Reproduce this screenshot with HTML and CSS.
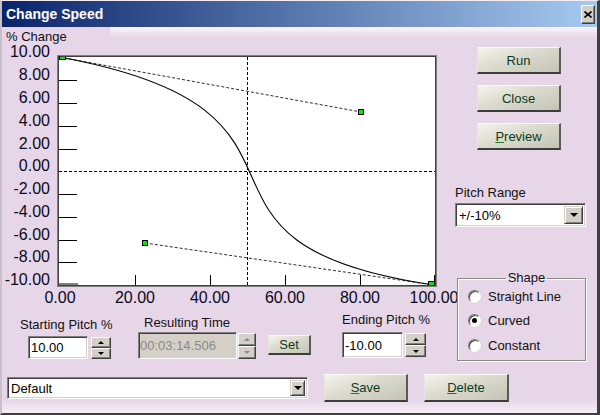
FILE: index.html
```html
<!DOCTYPE html>
<html lang="en">
  <head>
    <meta charset="UTF-8" />
    <meta name="viewport" content="width=device-width, initial-scale=1.0" />
    <title>Change Speed</title>
    <link rel="stylesheet" href="styles.css">
  </head>
  <body>
    <div class="window">
      <div class="titlebar">
        <span class="title">Change Speed</span>
        <button class="close-btn" aria-label="Close">
          <svg width="8" height="7" viewBox="0 0 8 7">
            <path d="M0.5 0.5 L7.5 6.5 M7.5 0.5 L0.5 6.5" stroke="#000" stroke-width="1.6" />
          </svg>
        </button>
      </div>

      <div class="content">
        <div class="main">
          <div class="left">
            <div class="axis-title">% Change</div>

            <!-- viewBox uses dialog coordinates so the numbers read like the layout -->
            <svg class="chart" width="452" height="266" viewBox="2 45 452 266">
              <defs>
                <clipPath id="plot">
                  <rect x="59" y="57" width="376" height="228" />
                </clipPath>
              </defs>

              <rect x="57" y="55" width="380" height="232" fill="#808080" />
              <rect x="58" y="56" width="378" height="230" fill="#404040" />
              <rect x="59" y="57" width="376" height="228" fill="#fff" />

              <g class="ticks">
                <path d="M59 80.5h18M59 103.5h18M59 126.5h18M59 149.5h18M59 194.5h18M59 217.5h18M59 240.5h18M59 262.5h18" />
                <path d="M59 284h19" stroke-width="2" />
                <path d="M135.5 275v10M210.5 275v10M285.5 275v10M360.5 275v10M434.5 275v10" />
              </g>

              <g class="guides">
                <path d="M59 171.5H435" />
                <path d="M247.5 57V285" />
              </g>

              <g class="handles-lines">
                <path d="M59 57L361 112" />
                <path d="M145 243L434 285" />
              </g>

              <path class="curve" d="M59 57C361 112 145 243 434 285" />

              <g class="handle" clip-path="url(#plot)">
                <rect x="59.5" y="53.5" width="6" height="6" />
                <rect x="428.5" y="281.5" width="6" height="6" />
              </g>
              <g class="handle">
                <rect x="358.5" y="109.5" width="5" height="5" />
                <rect x="142.5" y="240.5" width="5" height="5" />
              </g>

              <g class="axis-label y-label">
                <text x="50" y="57">10.00</text>
                <text x="50" y="80">8.00</text>
                <text x="50" y="103">6.00</text>
                <text x="50" y="126">4.00</text>
                <text x="50" y="149">2.00</text>
                <text x="50" y="171">0.00</text>
                <text x="50" y="194">-2.00</text>
                <text x="50" y="217">-4.00</text>
                <text x="50" y="240">-6.00</text>
                <text x="50" y="262">-8.00</text>
                <text x="50" y="285">-10.00</text>
              </g>
              <g class="axis-label x-label">
                <text x="60" y="303">0.00</text>
                <text x="135" y="303">20.00</text>
                <text x="210" y="303">40.00</text>
                <text x="285" y="303">60.00</text>
                <text x="360" y="303">80.00</text>
                <text x="434" y="303">100.00</text>
              </g>
            </svg>

            <div class="controls">
              <div class="field start-pitch">
                <div class="field-label">Starting Pitch %</div>
                <div class="field-row">
                  <input class="edit" type="text" value="10.00" />
                  <div class="spin">
                    <span class="spin-up"></span>
                    <span class="spin-down"></span>
                  </div>
                </div>
              </div>

              <div class="field result-time">
                <div class="field-label">Resulting Time</div>
                <div class="field-row">
                  <input class="edit" type="text" value="00:03:14.506" disabled />
                  <div class="spin disabled">
                    <span class="spin-up"></span>
                    <span class="spin-down"></span>
                  </div>
                </div>
              </div>

              <button class="skin-btn set-btn">Set</button>

              <div class="field end-pitch">
                <div class="field-label">Ending Pitch %</div>
                <div class="field-row">
                  <input class="edit" type="text" value="-10.00" />
                  <div class="spin">
                    <span class="spin-up"></span>
                    <span class="spin-down"></span>
                  </div>
                </div>
              </div>
            </div>
          </div>

          <div class="side">
            <button class="skin-btn">Run</button>
            <button class="skin-btn">Close</button>
            <button class="skin-btn"><u>P</u>review</button>

            <div class="range-label">Pitch Range</div>
            <div class="combo range">
              <span class="combo-value">+/-10%</span>
              <span class="drop-btn"></span>
            </div>

            <fieldset class="shape">
              <legend>Shape</legend>
              <label class="radio-row"><span class="radio"></span>Straight Line</label>
              <label class="radio-row"><span class="radio checked"></span>Curved</label>
              <label class="radio-row"><span class="radio"></span>Constant</label>
            </fieldset>
          </div>
        </div>

        <div class="footer">
          <div class="combo preset">
            <span class="combo-value">Default</span>
            <span class="drop-btn"></span>
          </div>
          <button class="skin-btn"><u>S</u>ave</button>
          <button class="skin-btn"><u>D</u>elete</button>
        </div>
      </div>
    </div>
  </body>
</html>
```

FILE: styles.css
```css
body {
  margin: 0;
  font-family: "Liberation Sans", Arial, sans-serif;
  font-size: 13px;
  color: #111;
  background: #e6d6e7;
}
.window {
  width: 600px;
  height: 415px;
  box-sizing: border-box;
  border-style: solid;
  border-width: 1px 3px 2px 2px;
  border-color: #f4eef4 #404040 #404040 #c8c0c8;
  display: flex;
  flex-direction: column;
  background: #e6d6e7;
}
.titlebar {
  height: 26px;
  flex: none;
  display: flex;
  align-items: center;
  justify-content: space-between;
  padding: 0 2px 0 4px;
  background: linear-gradient(to right, #0a246a, #a6caf0);
  color: #fff;
  font-size: 14px;
  font-weight: bold;
  line-height: 16px;
}
.close-btn {
  box-sizing: border-box;
  width: 14px;
  height: 19px;
  padding: 0;
  display: flex;
  align-items: center;
  justify-content: center;
  background: #d4d0c8;
  border: 1px solid;
  border-color: #fff #404040 #404040 #fff;
  box-shadow: inset -1px -1px 0 #808080;
}
.content {
  flex: 1;
  display: flex;
  flex-direction: column;
  background: linear-gradient(
    #fbf6fb,
    #e6d6e7 11px,
    #e6d6e7 calc(100% - 14px),
    #f6eef6
  );
}
.main {
  display: grid;
  grid-template-columns: 452px 1fr;
}
.axis-title {
  width: 104px;
  height: 16px;
  padding: 2px 0 0 4px;
  line-height: 16px;
  background: #e6d6e7;
}
.chart {
  display: block;
  overflow: visible;
}
.ticks path {
  stroke: #000;
  stroke-width: 1;
  fill: none;
}
.guides path {
  stroke: #000;
  stroke-width: 1;
  stroke-dasharray: 3 2;
  fill: none;
}
.handles-lines path {
  stroke: #303030;
  stroke-width: 1;
  stroke-dasharray: 3 2;
  fill: none;
}
.curve {
  stroke: #000;
  stroke-width: 1.1;
  fill: none;
}
.handle rect {
  fill: #10e010;
  stroke: #000;
  stroke-width: 1;
}
.axis-label {
  font-family: "Liberation Sans", Arial, sans-serif;
  font-size: 16px;
  fill: #0a0a1e;
}
.y-label {
  text-anchor: end;
}
.x-label {
  text-anchor: middle;
}

/* pitch / time fields under the chart */
.controls {
  height: 52px;
  display: flex;
  align-items: flex-start;
}
.field-label {
  line-height: 16px;
  white-space: nowrap;
}
.field-row {
  display: flex;
  align-items: flex-start;
}
.edit {
  box-sizing: border-box;
  margin: 0;
  padding: 0 0 0 2px;
  font: inherit;
  font-size: 13px;
  color: #000;
  background: #fff;
  border: 1px solid;
  border-color: #808080 #fff #fff #808080;
  box-shadow: inset 1px 1px 0 #404040, inset -1px -1px 0 #d4d0c8;
  outline: none;
}
.edit:disabled {
  background: #d4d0c8;
  color: #8a8a8a;
  padding-left: 1px;
}
.start-pitch {
  width: 93px;
  margin: 6px 0 0 18px;
}
.start-pitch .field-row {
  margin: 3px 0 0 8px;
  gap: 3px;
}
.start-pitch .edit {
  width: 60px;
  height: 23px;
}
.start-pitch .spin {
  width: 20px;
  height: 22px;
  margin-top: 1px;
}
.result-time {
  margin: 4px 0 0 25px;
}
.result-time .field-label {
  margin-left: 6px;
}
.result-time .field-row {
  margin-top: 1px;
  gap: 1px;
}
.result-time .edit {
  width: 99px;
  height: 27px;
}
.result-time .spin {
  width: 18px;
  height: 26px;
  margin-top: 1px;
}
.set-btn {
  width: 43px;
  height: 20px;
  margin: 24px 0 0 12px;
}
.end-pitch {
  margin: 1px 0 0 31px;
}
.end-pitch .field-row {
  margin-top: 4px;
  gap: 2px;
}
.end-pitch .edit {
  width: 61px;
  height: 26px;
}
.end-pitch .spin {
  width: 21px;
  height: 24px;
  margin-top: 1px;
}

/* up/down arrows */
.spin {
  display: flex;
  flex-direction: column;
}
.spin span {
  flex: 1;
  display: flex;
  align-items: center;
  justify-content: center;
  box-sizing: border-box;
  background: #d4d0c8;
  border: 1px solid;
  border-color: #fff #404040 #404040 #fff;
  box-shadow: inset -1px -1px 0 #808080;
}
.spin-up::after,
.spin-down::after {
  content: "";
  border-left: 3px solid transparent;
  border-right: 3px solid transparent;
}
.spin-up::after {
  border-bottom: 3px solid #000;
}
.spin-down::after {
  border-top: 3px solid #000;
}
.spin.disabled .spin-up::after {
  border-bottom-color: #8a8a8a;
}
.spin.disabled .spin-down::after {
  border-top-color: #8a8a8a;
}

/* skinned push buttons */
.skin-btn {
  box-sizing: border-box;
  padding: 0;
  font: inherit;
  font-size: 13px;
  color: #0d3b22;
  background: linear-gradient(160deg, #f4f4ec 0%, #dadace 45%, #c4c4b6 100%);
  border-style: solid;
  border-width: 1px 2px 2px 1px;
  border-color: #fafaf4 #5a5a58 #3c3c3c #e6e6de;
}
.skin-btn u {
  text-decoration-color: #1a7a2a;
}

/* right column */
.side {
  display: flex;
  flex-direction: column;
  align-items: flex-start;
  padding-top: 20px;
}
.side .skin-btn {
  width: 84px;
  height: 27px;
  margin-left: 23px;
}
.side .skin-btn + .skin-btn {
  margin-top: 11px;
}
.range-label {
  margin: 35px 0 0 1px;
  line-height: 16px;
}

/* drop-down lists */
.combo {
  box-sizing: border-box;
  display: flex;
  align-items: center;
  padding: 2px;
  background: #fff;
  border: 1px solid;
  border-color: #808080 #fff #fff #808080;
  box-shadow: inset 1px 1px 0 #404040, inset -1px -1px 0 #d4d0c8;
}
.combo-value {
  flex: 1;
  padding-left: 1px;
  color: #000;
}
.drop-btn {
  box-sizing: border-box;
  align-self: stretch;
  display: flex;
  align-items: center;
  justify-content: center;
  background: #d4d0c8;
  border: 1px solid;
  border-color: #d4d0c8 #404040 #404040 #d4d0c8;
  box-shadow: inset 1px 1px 0 #fff, inset -1px -1px 0 #808080;
}
.drop-btn::after {
  content: "";
  border-left: 4px solid transparent;
  border-right: 4px solid transparent;
  border-top: 4px solid #000;
}
.range {
  width: 131px;
  height: 24px;
  margin: 2px 0 0 1px;
}
.range .drop-btn {
  width: 19px;
}

/* shape radio group */
.shape {
  box-sizing: border-box;
  width: 129px;
  margin: 45px 0 0 3px;
  padding: 0 0 3px 10px;
  border: 1px solid #8a8a8a;
  box-shadow: 1px 1px 0 #fff, inset 1px 1px 0 #fff;
}
.shape legend {
  margin: 0 auto;
  padding: 0 2px;
  line-height: 12px;
}
.radio-row {
  display: flex;
  align-items: center;
  gap: 7px;
  height: 24px;
}
.radio-row + .radio-row {
  height: 25px;
}
.radio-row:last-child {
  height: 24px;
}
.radio {
  box-sizing: border-box;
  width: 13px;
  height: 13px;
  display: flex;
  align-items: center;
  justify-content: center;
  border-radius: 50%;
  background: #fff;
  border: 1px solid;
  border-color: #808080 #fff #fff #808080;
  box-shadow: inset 1px 1px 0 #404040, 0 0 0 0.5px #d4d0c8;
}
.radio.checked::after {
  content: "";
  width: 5px;
  height: 5px;
  border-radius: 50%;
  background: #000;
}

/* bottom row */
.footer {
  display: flex;
  align-items: flex-start;
  padding: 11px 0 0 5px;
}
.preset {
  width: 301px;
  height: 22px;
  margin-top: 3px;
  padding: 2px 2px 2px 2px;
}
.preset .drop-btn {
  width: 15px;
}
.footer .skin-btn {
  width: 84px;
  height: 28px;
  margin-left: 16px;
}
.footer .skin-btn:last-child {
  width: 85px;
}
```
